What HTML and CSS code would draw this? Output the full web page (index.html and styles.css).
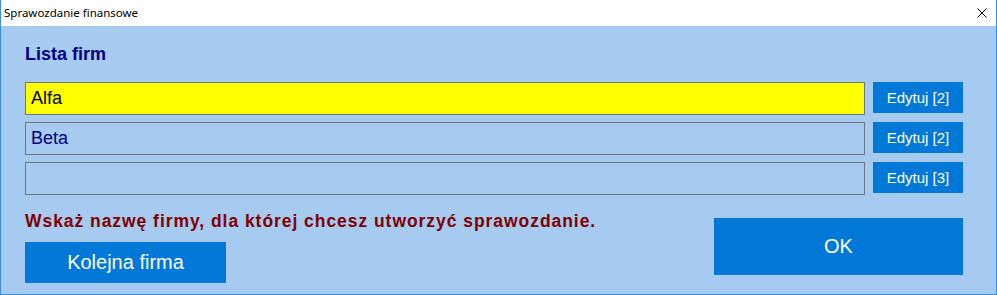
FILE: index.html
```html
<!DOCTYPE html>
<html lang="pl">
<head>
<meta charset="utf-8">
<title>Sprawozdanie finansowe</title>
<link rel="stylesheet" href="styles.css">
</head>
<body>
<div class="window">
  <div class="titlebar">
    <span class="title">Sprawozdanie finansowe</span>
    <span class="close">
      <svg width="10" height="10" viewBox="0 0 10 10"><path d="M0.5 0.5L9.5 9.5M9.5 0.5L0.5 9.5" stroke="#000" stroke-width="1" fill="none"/></svg>
    </span>
  </div>
  <div class="content">
    <h1 class="heading">Lista firm</h1>
    <div class="rows">
      <div class="row">
        <div class="field selected">Alfa</div>
        <button class="btn edit">Edytuj [2]</button>
      </div>
      <div class="row">
        <div class="field">Beta</div>
        <button class="btn edit">Edytuj [2]</button>
      </div>
      <div class="row">
        <div class="field"></div>
        <button class="btn edit">Edytuj [3]</button>
      </div>
    </div>
    <div class="bottom">
      <div class="left">
        <p class="message">Wskaż nazwę firmy, dla której chcesz utworzyć sprawozdanie.</p>
        <button class="btn next">Kolejna firma</button>
      </div>
      <button class="btn ok">OK</button>
    </div>
  </div>
</div>
</body>
</html>
```
FILE: styles.css
```css
* { box-sizing: border-box; }
html, body { margin: 0; padding: 0; }
body { width: 997px; height: 295px; overflow: hidden; background: #a6caf0; }

.window {
  width: 997px;
  height: 295px;
  border: 1px solid #3a8ee6;
  border-top: none;
  background: #a6caf0;
  display: flex;
  flex-direction: column;
}

.titlebar {
  height: 26px;
  background: #ffffff;
  display: flex;
  align-items: center;
  justify-content: space-between;
  padding: 0 9px 1px 3px;
  flex-shrink: 0;
}
.title {
  font-family: "Noto Sans", "DejaVu Sans", sans-serif;
  font-size: 11.5px;
  color: #000;
  line-height: 16px;
}
.close { display: flex; width: 10px; height: 10px; }
.close svg { display: block; }

.content {
  padding: 18px 33px 0 24px;
  font-family: "Liberation Sans", Arial, sans-serif;
}

.heading {
  margin: 0;
  font-size: 18px;
  font-weight: bold;
  line-height: 21px;
  color: #000080;
}

.rows {
  margin-top: 17px;
  display: flex;
  flex-direction: column;
  gap: 7px;
}
.row {
  display: flex;
  align-items: flex-start;
  gap: 8px;
}
.field {
  width: 840px;
  height: 33px;
  border: 1px solid #6e7680;
  background: #a6caf0;
  color: #000080;
  font-size: 18px;
  line-height: 31px;
  padding-left: 5px;
}
.field.selected { background: #ffff00; color: #000; }

.btn {
  border: none;
  background: #0078d7;
  color: #fff;
  font-family: "Liberation Sans", Arial, sans-serif;
  padding: 0;
  margin: 0;
  display: flex;
  align-items: center;
  justify-content: center;
}
.edit {
  width: 90px;
  height: 31px;
  font-size: 15px;
}

.bottom {
  margin-top: 16px;
  display: flex;
  align-items: flex-start;
  justify-content: space-between;
}
.left { display: flex; flex-direction: column; }
.message {
  margin: 0;
  font-size: 17.5px;
  font-weight: bold;
  line-height: 20px;
  letter-spacing: 0.95px;
  color: #800000;
  white-space: nowrap;
}
.next {
  margin-top: 11px;
  width: 201px;
  height: 41px;
  font-size: 20px;
}
.ok {
  margin-top: 7px;
  width: 249px;
  height: 57px;
  font-size: 20px;
}
```
